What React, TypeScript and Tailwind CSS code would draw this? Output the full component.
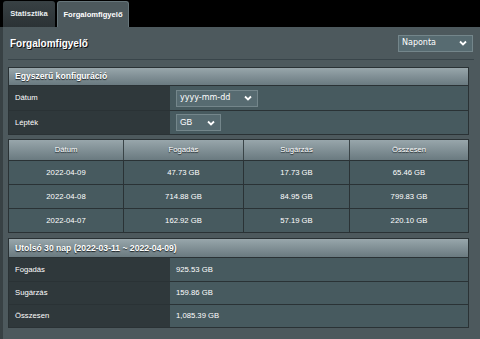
import React from 'react';

const Chevron = () => (
  <svg width="8" height="6" viewBox="0 0 8 6" className="shrink-0">
    <path d="M1 1.5 L4 4.5 L7 1.5" fill="none" stroke="#ffffff" strokeWidth="1.8" />
  </svg>
);

const Select = ({ value, className }: { value: string; className: string }) => (
  <div
    className={`flex items-center justify-between border border-[#74868b] bg-[#576b71] pl-[3px] pr-[5px] text-white ${className}`}
  >
    <span className="leading-none">{value}</span>
    <Chevron />
  </div>
);

const SectionHeader = ({ children, h }: { children: React.ReactNode; h: string }) => (
  <div
    className={`flex items-center bg-linear-to-b from-[#98a6ab] to-[#6a7a80] px-[6px] text-[8.6px] font-bold text-white [text-shadow:0_1px_1px_#1c2326] ${h}`}
  >
    {children}
  </div>
);

const daily = [
  { date: '2022-04-09', rx: '47.73 GB', tx: '17.73 GB', total: '65.46 GB' },
  { date: '2022-04-08', rx: '714.88 GB', tx: '84.95 GB', total: '799.83 GB' },
  { date: '2022-04-07', rx: '162.92 GB', tx: '57.19 GB', total: '220.10 GB' },
];

const summary = [
  { label: 'Fogadás', value: '925.53 GB', h: 'h-[24px]' },
  { label: 'Sugárzás', value: '159.86 GB', h: 'h-[23px]' },
  { label: 'Összesen', value: '1,085.39 GB', h: 'h-[23px]' },
];

export default function App() {
  return (
    <div className="flex h-[339px] w-[480px] flex-col overflow-hidden bg-black font-['Liberation_Sans',Arial,sans-serif] text-white">
      {/* tabs */}
      <div className="flex h-[27px] shrink-0 items-stretch gap-[2px] pl-[3px] pt-[1px]">
        <div className="flex w-[52px] items-center justify-center rounded-t-[3px] bg-linear-to-b from-[#384144] to-[#2b3235] text-[7.6px] font-bold text-[#e8eef0]">
          Statisztika
        </div>
        <div className="flex w-[72px] items-center justify-center rounded-t-[3px] border border-b-0 border-[#66757a] bg-[#4d595d] text-[7.6px] font-bold text-white">
          Forgalomfigyelő
        </div>
      </div>

      {/* panel */}
      <div className="flex flex-1 flex-col border-l-[3px] border-[#384144] bg-[#4d595d] pl-[5px] pr-[11px]">
        <div className="flex h-[32px] shrink-0 items-center justify-between">
          <h1 className="pl-[2px] text-[10px] font-bold text-white [text-shadow:1px_1px_0_#111]">Forgalomfigyelő</h1>
          <Select
            value="Naponta"
            className="-mr-[4px] h-[17px] w-[75px] font-['DejaVu_Sans',Verdana,sans-serif] text-[8px]"
          />
        </div>
        <div className="-mr-[5px] h-[2px] shrink-0 border-t border-[#39454a] border-b-[#56656a]" />

        {/* Egyszerű konfiguráció */}
        <div className="mt-[6px] border border-[#2a3235]">
          <SectionHeader h="h-[17px]">Egyszerű konfiguráció</SectionHeader>
          <div className="flex h-[25px] border-t border-[#2a3235] text-[7.7px]">
            <div className="flex w-[161px] items-center bg-[#2f383b] pl-[6px]">Dátum</div>
            <div className="flex flex-1 items-center bg-[#475a5f] pl-[6px]">
              <Select
                value="yyyy-mm-dd"
                className="h-[17px] w-[82px] font-['DejaVu_Sans',Verdana,sans-serif] text-[8px]"
              />
            </div>
          </div>
          <div className="flex h-[24px] border-t border-[#2a3235] text-[7.7px]">
            <div className="flex w-[161px] items-center bg-[#2f383b] pl-[6px]">Lépték</div>
            <div className="flex flex-1 items-center bg-[#475a5f] pl-[6px]">
              <Select value="GB" className="h-[17px] w-[45px] text-[8.5px]" />
            </div>
          </div>
        </div>

        {/* daily table */}
        <div className="mt-[4px] border border-[#2a3235] text-[7.7px]">
          <div className="grid h-[20px] grid-cols-[114px_120px_106px_1fr] bg-linear-to-b from-[#98a6ab] to-[#6a7a80] [text-shadow:0_1px_1px_#1c2326]">
            <div className="flex items-center justify-center">Dátum</div>
            <div className="flex items-center justify-center border-l border-[#3a4447]">Fogadás</div>
            <div className="flex items-center justify-center border-l border-[#3a4447]">Sugárzás</div>
            <div className="flex items-center justify-center border-l border-[#3a4447]">Összesen</div>
          </div>
          {daily.map((row) => (
            <div
              key={row.date}
              className="grid h-[24px] grid-cols-[114px_120px_106px_1fr] border-t border-[#2a3235] bg-[#475a5f]"
            >
              <div className="flex items-center justify-center">{row.date}</div>
              <div className="flex items-center justify-center border-l border-[#2a3235]">{row.rx}</div>
              <div className="flex items-center justify-center border-l border-[#2a3235]">{row.tx}</div>
              <div className="flex items-center justify-center border-l border-[#2a3235]">{row.total}</div>
            </div>
          ))}
        </div>

        {/* last 30 days */}
        <div className="mt-[5px] border border-[#2a3235] text-[7.7px]">
          <SectionHeader h="h-[18px]">Utolsó 30 nap (2022-03-11 ~ 2022-04-09)</SectionHeader>
          {summary.map((row) => (
            <div key={row.label} className={`flex border-t border-[#2a3235] ${row.h}`}>
              <div className="flex w-[161px] items-center bg-[#2f383b] pl-[6px]">{row.label}</div>
              <div className="flex flex-1 items-center bg-[#475a5f] pl-[6px]">{row.value}</div>
            </div>
          ))}
        </div>
      </div>
    </div>
  );
}
